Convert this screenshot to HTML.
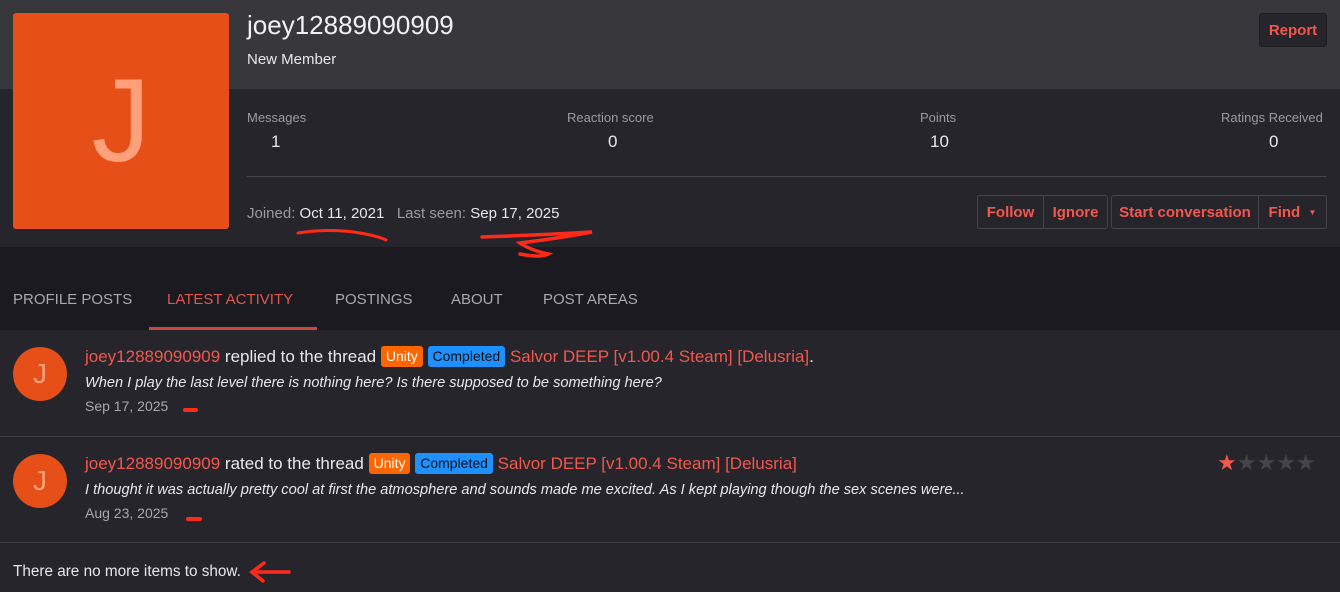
<!DOCTYPE html>
<html><head><meta charset="utf-8"><style>
*{margin:0;padding:0;box-sizing:border-box}
body{width:1340px;height:592px;overflow:hidden;background:#26252b;font-family:"Liberation Sans",sans-serif;color:#e8e8ea;position:relative}
.a{position:absolute;white-space:nowrap}
.red{color:#f4574c}
.lab{color:#9a9aa0;font-size:13px}
.val{font-size:17px;color:#e8e8ea}
.btn{position:absolute;top:195px;height:34px;border:1px solid #45444a;color:#f4574c;font-size:15px;font-weight:bold;display:flex;align-items:center;justify-content:center}
.tab{position:absolute;top:291px;font-size:15px;color:#a8a8b0}
.tag{display:inline-block;font-size:14px;padding:0 5px;height:21px;line-height:21px;border-radius:3px;vertical-align:1px}
.circ{position:absolute;left:13px;width:54px;height:54px;border-radius:50%;background:#e64f17;color:#ffa07a;font-size:28px;text-align:center;line-height:54px}
</style></head><body>
<div class="a" style="left:0;top:0;width:1340px;height:89px;background:#38373c"></div>
<div class="a" style="left:0;top:89px;width:1340px;height:158px;background:#26252b"></div>
<div class="a" style="left:0;top:247px;width:1340px;height:83px;background:#1b1a20"></div>
<div class="a" style="left:13px;top:13px;width:216px;height:216px;background:#e64f17;border-radius:3px;color:#ffa07a;font-size:118px;text-align:center;line-height:216px">J</div>
<div class="a" style="left:247px;top:10px;font-size:26px;color:#f2f2f4">joey12889090909</div>
<div class="a" style="left:247px;top:51px;font-size:15px">New Member</div>
<div class="a" style="left:1259px;top:13px;width:68px;height:34px;background:#26252b;border:1px solid #1e1d22;border-radius:3px;color:#f4574c;font-size:15px;font-weight:bold;display:flex;align-items:center;justify-content:center">Report</div>
<div class="a lab" style="left:247px;top:110px">Messages</div>
<div class="a val" style="left:271px;top:132px">1</div>
<div class="a lab" style="left:567px;top:110px">Reaction score</div>
<div class="a val" style="left:608px;top:132px">0</div>
<div class="a lab" style="left:920px;top:110px">Points</div>
<div class="a val" style="left:930px;top:132px">10</div>
<div class="a lab" style="left:1221px;top:110px">Ratings Received</div>
<div class="a val" style="left:1269px;top:132px">0</div>
<div class="a" style="left:247px;top:176px;width:1080px;height:1px;background:#45444a"></div>
<div class="a" style="left:247px;top:205px;font-size:15px;color:#9a9aa0">Joined: <span style="color:#e8e8ea">Oct 11, 2021</span>&nbsp;&nbsp;&nbsp;Last seen: <span style="color:#e8e8ea">Sep 17, 2025</span></div>
<div class="btn" style="left:977px;width:67px;border-radius:3px 0 0 3px">Follow</div>
<div class="btn" style="left:1043px;width:65px;border-radius:0 3px 3px 0">Ignore</div>
<div class="btn" style="left:1111px;width:148px;border-radius:3px 0 0 3px">Start conversation</div>
<div class="btn" style="left:1258px;width:69px;border-radius:0 3px 3px 0">Find&nbsp;&nbsp;<span style="font-size:8px">&#9660;</span></div>
<svg class="a" style="left:0;top:0" width="1340" height="592">
<path d="M298 233 Q330 228 360 233 Q378 236 386 240" stroke="#ff2a1a" stroke-width="3" fill="none" stroke-linecap="round"/>
<path d="M482 237 Q540 235 592 232 Q560 238 520 243 Q530 250 548 254 Q540 258 520 254" stroke="#ff2a1a" stroke-width="3.5" fill="none" stroke-linecap="round"/>
<path d="M185 410 L196 410" stroke="#ff2a1a" stroke-width="4" stroke-linecap="round"/>
<path d="M188 519 L200 519" stroke="#ff2a1a" stroke-width="4" stroke-linecap="round"/>
<path d="M289 572 L253 572 M264 563 L252 572 L263 581" stroke="#ff2a1a" stroke-width="3.5" fill="none" stroke-linecap="round"/>
</svg>
<div class="tab" style="left:13px">PROFILE POSTS</div>
<div class="tab" style="left:167px;color:#e0574c">LATEST ACTIVITY</div>
<div class="a" style="left:149px;top:327px;width:168px;height:3px;background:#c9473e"></div>
<div class="tab" style="left:335px">POSTINGS</div>
<div class="tab" style="left:451px">ABOUT</div>
<div class="tab" style="left:543px">POST AREAS</div>
<div class="circ" style="top:347px">J</div>
<div class="a" style="left:85px;top:346px;font-size:17px"><span class="red">joey12889090909</span> replied to the thread <span class="tag" style="background:#ff6600;color:#fff">Unity</span> <span class="tag" style="background:#1e90ff;color:#111">Completed</span> <span class="red">Salvor DEEP [v1.00.4 Steam] [Delusria]</span>.</div>
<div class="a" style="left:85px;top:375px;font-size:14.6px;font-style:italic">When I play the last level there is nothing here? Is there supposed to be something here?</div>
<div class="a" style="left:85px;top:398px;font-size:14px;color:#a8a8b0">Sep 17, 2025</div>
<div class="a" style="left:0;top:436px;width:1340px;height:1px;background:#3e3d43"></div>
<div class="circ" style="top:454px">J</div>
<div class="a" style="left:85px;top:453px;font-size:17px"><span class="red">joey12889090909</span> rated to the thread <span class="tag" style="background:#ff6600;color:#fff">Unity</span> <span class="tag" style="background:#1e90ff;color:#111">Completed</span> <span class="red">Salvor DEEP [v1.00.4 Steam] [Delusria]</span></div>
<div class="a" style="left:85px;top:482px;font-size:14.6px;font-style:italic">I thought it was actually pretty cool at first the atmosphere and sounds made me excited. As I kept playing though the sex scenes were...</div>
<div class="a" style="left:85px;top:505px;font-size:14px;color:#a8a8b0">Aug 23, 2025</div>
<div class="a" style="left:1217px;top:450px;font-size:22px;letter-spacing:0px"><span style="color:#f4574c">★</span><span style="color:#45444a">★★★★</span></div>
<div class="a" style="left:0;top:542px;width:1340px;height:1px;background:#3e3d43"></div>
<div class="a" style="left:13px;top:563px;font-size:15.3px">There are no more items to show.</div>
</body></html>
